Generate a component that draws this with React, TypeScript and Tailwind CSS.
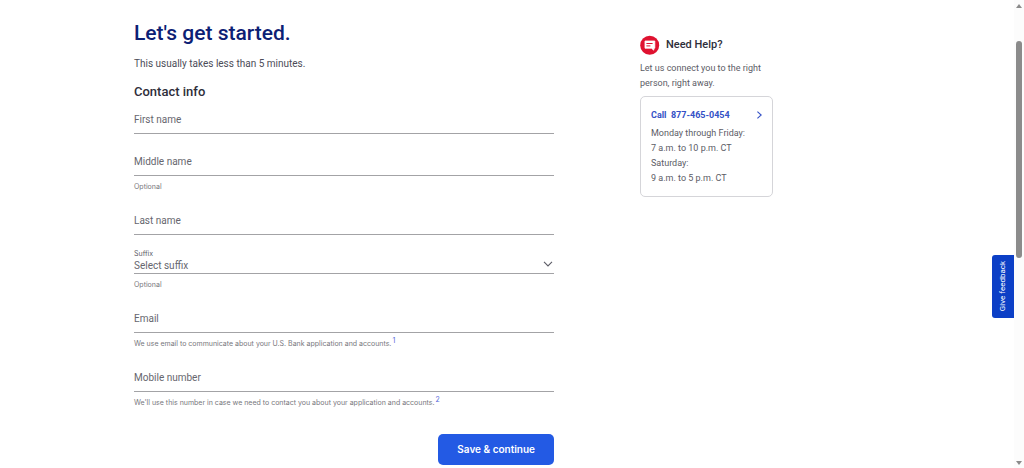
import React, { useState } from "react";

type FieldProps = {
  name: string;
  label: string;
  type?: string;
  value: string;
  onChange: (event: React.ChangeEvent<HTMLInputElement>) => void;
  children?: React.ReactNode;
};

const Hint = ({ children }: { children: React.ReactNode }) => (
  <p className="mt-1 font-['Inter',sans-serif] text-[7px] leading-[13px] text-[#77777d]">
    {children}
  </p>
);

const Field = ({
  name,
  label,
  type = "text",
  value,
  onChange,
  children,
}: FieldProps) => {
  return (
    <div>
      <div className="grid items-center">
        <label
          htmlFor={name}
          className={
            value
              ? "sr-only"
              : "col-start-1 row-start-1 text-[10px] leading-4 text-[#66666e] pointer-events-none"
          }
        >
          {label}
        </label>
        <input
          id={name}
          name={name}
          type={type}
          value={value}
          onChange={onChange}
          className="col-start-1 row-start-1 w-full h-7 text-[10px] bg-transparent border-b border-[#a3a3a6] focus:outline-none focus:border-[#235ae4]"
        />
      </div>
      {children && <Hint>{children}</Hint>}
    </div>
  );
};

const Note = ({ id }: { id: string }) => (
  <a
    href={"#note-" + id}
    className="ml-px text-[7px] leading-none align-super text-[#5468dc]"
  >
    {id}
  </a>
);

const HelpIcon = () => (
  <svg viewBox="0 0 20 20" className="w-5 h-5" aria-hidden="true">
    <circle cx="9.7" cy="10.2" r="9.5" fill="#df1230" />
    <path
      d="M5 6h9.8v7.2h-1v2l-2.4-2H5z"
      fill="#fff"
      stroke="#fff"
      strokeWidth="0.8"
      strokeLinejoin="round"
    />
    <path d="M6.4 8.5h6.2M6.4 10.9h4" stroke="#df1230" strokeWidth="1" />
  </svg>
);

const HelpPanel = () => (
  <aside className="w-[133px] pt-[35px]">
    <div className="flex items-center gap-[6px]">
      <HelpIcon />
      <h2 className="text-[11px] leading-5 font-medium text-[#2e2e3a]">
        Need Help?
      </h2>
    </div>
    <p className="mt-[6px] text-[9px] leading-[15px] text-[#5c5c66]">
      Let us connect you to the right person, right away.
    </p>
    <div className="mt-[5px] px-[10px] pt-[9px] pb-[10px] border border-[#d5d5d9] rounded-[5px]">
      <a
        href="tel:877-465-0454"
        className="mb-[2px] flex items-center justify-between text-[9px] leading-[18px] font-bold text-[#3451c6]"
      >
        <span>Call&nbsp; 877-465-0454</span>
        <svg
          viewBox="0 0 6 8"
          className="w-[6px] h-2"
          fill="none"
          stroke="currentColor"
          strokeWidth="1.1"
          aria-hidden="true"
        >
          <path d="M1.4 0.6L5.2 4L1.4 7.4" />
        </svg>
      </a>
      <p className="text-[9px] leading-[15px] text-[#5c5c66]">
        Monday through Friday:
        <br />
        7 a.m. to 10 p.m. CT
        <br />
        Saturday:
        <br />9 a.m. to 5 p.m. CT
      </p>
    </div>
  </aside>
);

const ScrollRail = () => (
  <div
    aria-hidden="true"
    className="sticky top-0 h-screen w-[10px] shrink-0 flex flex-col items-center bg-[#fcfcfc] pt-1 pb-[3px]"
  >
    <svg viewBox="0 0 6 4" className="w-[6px] h-1">
      <path d="M0 4L3 0L6 4z" fill="#8b8b8b" />
    </svg>
    <div className="flex-1 w-full flex flex-col items-center pt-[33px]">
      <div className="w-[6px] h-[217px] rounded-full bg-[#8b8b8b]" />
    </div>
    <svg viewBox="0 0 6 4" className="w-[6px] h-1">
      <path d="M0 0L3 4L6 0z" fill="#8b8b8b" />
    </svg>
  </div>
);

const ContactPage = () => {
  const [formData, setFormData] = useState({
    firstName: "",
    middleName: "",
    lastName: "",
    suffix: "",
    email: "",
    mobile: "",
  });

  const handleChangeData = (
    event: React.ChangeEvent<HTMLInputElement | HTMLSelectElement>
  ) => {
    const name = event.target.name;
    const value = event.target.value;

    setFormData({
      ...formData,
      [name]: value,
    });
  };

  return (
    <div className="min-h-screen flex bg-white font-['Roboto',sans-serif]">
      <div className="flex-1 min-w-0">
        <div className="max-w-[746px] mx-auto flex justify-between">
          <main className="w-[420px] pt-[19px]">
            <h1 className="text-[21px] leading-7 font-medium text-[#0c2074]">
              Let's get started.
            </h1>
            <p className="mt-[7px] text-[10px] leading-5 text-[#4c4c58]">
              This usually takes less than 5 minutes.
            </p>
            <form onSubmit={(event) => event.preventDefault()}>
              <h2 className="mt-[7px] mb-1 text-[13px] leading-[21px] font-medium text-[#2e2e3a]">
                Contact info
              </h2>
              <div className="flex flex-col gap-[14px]">
                <Field
                  name="firstName"
                  label="First name"
                  value={formData.firstName}
                  onChange={handleChangeData}
                />
                <Field
                  name="middleName"
                  label="Middle name"
                  value={formData.middleName}
                  onChange={handleChangeData}
                >
                  Optional
                </Field>
                <Field
                  name="lastName"
                  label="Last name"
                  value={formData.lastName}
                  onChange={handleChangeData}
                />
                <div>
                  <label
                    htmlFor="suffix"
                    className="block font-['Inter',sans-serif] text-[7px] leading-[9px] text-[#5c5c66]"
                  >
                    Suffix
                  </label>
                  <div className="grid items-center">
                    <select
                      id="suffix"
                      name="suffix"
                      value={formData.suffix}
                      onChange={handleChangeData}
                      className="col-start-1 row-start-1 w-full h-4 appearance-none bg-transparent border-b border-[#a3a3a6] text-[10px] leading-[15px] text-[#66666e] focus:outline-none"
                    >
                      <option value="">Select suffix</option>
                      <option value="jr">Jr.</option>
                      <option value="sr">Sr.</option>
                    </select>
                    <svg
                      viewBox="0 0 10 6"
                      className="col-start-1 row-start-1 justify-self-end mr-px mb-1 w-[10px] h-[6px] pointer-events-none"
                      fill="none"
                      stroke="#5c5c66"
                      strokeWidth="1.1"
                      aria-hidden="true"
                    >
                      <path d="M1 0.9L5 4.9L9 0.9" />
                    </svg>
                  </div>
                  <Hint>Optional</Hint>
                </div>
                <Field
                  name="email"
                  label="Email"
                  type="email"
                  value={formData.email}
                  onChange={handleChangeData}
                >
                  We use email to communicate about your U.S. Bank application
                  and accounts.
                  <Note id="1" />
                </Field>
                <Field
                  name="mobile"
                  label="Mobile number"
                  type="tel"
                  value={formData.mobile}
                  onChange={handleChangeData}
                >
                  We'll use this number in case we need to contact you about
                  your application and accounts.
                  <Note id="2" />
                </Field>
              </div>
              <div className="mt-6 flex justify-end">
                <button
                  type="submit"
                  className="px-[19px] h-[31px] font-['Inter',sans-serif] text-[10px] font-semibold text-white bg-[#235ae4] rounded-[5px] hover:bg-[#0c44c8]"
                >
                  Save & continue
                </button>
              </div>
            </form>
          </main>
          <div className="w-[240px]">
            <HelpPanel />
          </div>
        </div>
      </div>
      <button
        type="button"
        className="fixed right-[10px] top-[255px] w-[22px] h-[63px] flex items-center justify-center rounded-l-[3px] bg-[#0c3fc6] text-white text-[8px] [writing-mode:vertical-rl]"
      >
        <span className="rotate-180">Give feedback</span>
      </button>
      <ScrollRail />
    </div>
  );
};

export default ContactPage;
